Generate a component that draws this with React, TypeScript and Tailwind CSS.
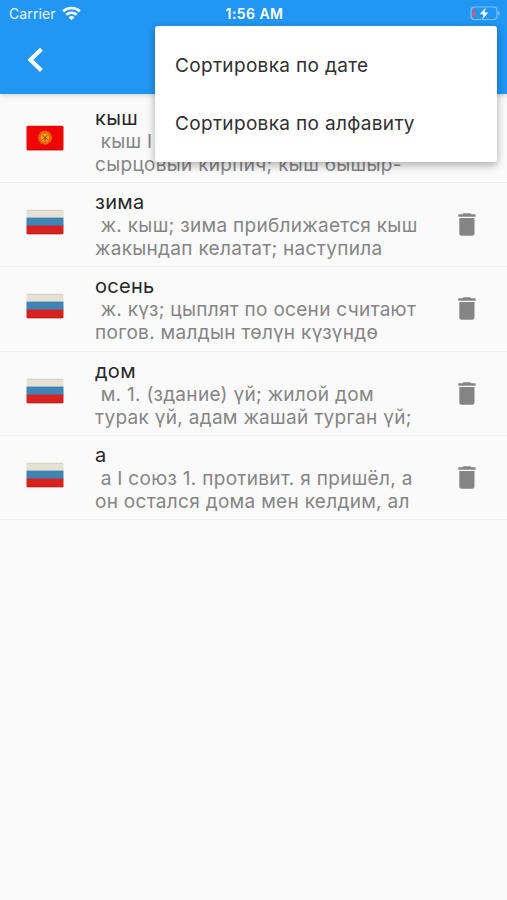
import React from 'react';

interface Entry {
  word: string;
  lines: string[];
  lang: 'kg' | 'ru';
}

const entries: Entry[] = [
  { word: 'кыш', lines: [' кыш I', 'сырцовый кирпич; кыш бышыр-'], lang: 'kg' },
  { word: 'зима', lines: [' ж. кыш; зима приближается кыш', 'жакындап келатат; наступила'], lang: 'ru' },
  { word: 'осень', lines: [' ж. күз; цыплят по осени считают', 'погов. малдын төлүн күзүндө'], lang: 'ru' },
  { word: 'дом', lines: [' м. 1. (здание) үй; жилой дом', 'турак үй, адам жашай турган үй;'], lang: 'ru' },
  { word: 'а', lines: [' а I союз 1. противит. я пришёл, а', 'он остался дома мен келдим, ал'], lang: 'ru' },
];

const RussianFlag: React.FC = () => (
  <svg width="38" height="26" viewBox="0 0 38 26">
    <clipPath id="ru">
      <rect x="0.5" y="0.7" width="37" height="24.6" rx="1.5" />
    </clipPath>
    <g clipPath="url(#ru)">
      <rect width="38" height="9" fill="#e6e1d5" />
      <rect y="8.6" width="38" height="8.4" fill="#3f84b5" />
      <rect y="16.6" width="38" height="9.4" fill="#d8221f" />
      <path d="M0 25h38" stroke="#ad1c18" strokeWidth="1" />
      <path d="M0 1.2h38" stroke="#d0cbbd" strokeWidth="1" />
    </g>
  </svg>
);

const KyrgyzFlag: React.FC = () => (
  <svg width="38" height="26" viewBox="0 0 38 26">
    <rect x="0.5" y="0.7" width="37" height="24.6" rx="1.5" fill="#ee0505" />
    <path d="M1 24.8h36" stroke="#b80808" strokeWidth="0.8" />
    <circle cx="19" cy="12.6" r="6" fill="none" stroke="#e8800c" strokeWidth="1.8" strokeDasharray="1.2 0.3" />
    <circle cx="19" cy="12.6" r="5" fill="#f4a414" />
    <path d="M19 12.6l-2.6-2.8M19 12.6l2.6-2.8M19 12.6v3.6M16.2 14.8l2.8-2.2 2.8 2.2" fill="none" stroke="#8f2a08" strokeWidth="0.8" />
    <circle cx="19" cy="12.6" r="4.6" fill="none" stroke="#d8580a" strokeWidth="0.6" />
  </svg>
);

const TrashIcon: React.FC = () => (
  <svg width="18" height="23" viewBox="0 0 18 23" fill="#858585">
    <path d="M0.3 1.3h4.2L5.4 0.3h7.1l0.9 1h4.2v2.4H0.3z" />
    <path d="M1.3 5h15.2v15.4a2.3 2.3 0 0 1-2.3 2.3H3.6a2.3 2.3 0 0 1-2.3-2.3z" />
  </svg>
);

const StatusBar: React.FC = () => (
  <div className="grid h-[27px] grid-cols-3 items-center pl-[9px] pr-[7px] text-white">
    <div className="flex items-center gap-[6px]">
      <span className="text-[14px] tracking-[0.1px] text-white/90">Carrier</span>
      <svg width="19" height="15" viewBox="0 0 19 15" fill="none" stroke="white" strokeWidth="2.6">
        <path d="M1.2 5.3a12 12 0 0 1 16.6 0" />
        <path d="M4.3 8.8a7.6 7.6 0 0 1 10.4 0" />
        <path d="M9.5 14.3l-2.9-3a4.3 4.3 0 0 1 5.8 0z" fill="white" stroke="none" />
      </svg>
    </div>
    <span className="pb-px text-center text-[14px] font-semibold tracking-[0.45px]">1:56 AM</span>
    <svg className="justify-self-end" width="30" height="15" viewBox="0 0 30 15">
      <rect x="1" y="1" width="26" height="12.5" rx="3.5" fill="none" stroke="white" strokeOpacity="0.42" strokeWidth="1.2" />
      <path d="M28.2 5v4.6c1.1-.5 1.7-1.3 1.7-2.3s-.6-1.8-1.7-2.3z" fill="white" fillOpacity="0.42" />
      <rect x="2.8" y="3" width="2.6" height="8.5" rx="1" fill="#d9566b" />
      <path d="M15.6 1.8l-5.8 6.4h3.6l-1 5 5.8-6.6h-3.6z" fill="white" />
    </svg>
  </div>
);

const EntryRow: React.FC<{ entry: Entry; deletable: boolean }> = ({ entry, deletable }) => (
  <li className="flex h-[84.25px] items-center border-b border-[#eeeeee] pl-[26px] pr-[31px]">
    <div className="w-[69px] shrink-0 pb-[5px]">
      {entry.lang === 'kg' ? <KyrgyzFlag /> : <RussianFlag />}
    </div>
    <div className="flex-1 whitespace-pre pt-[2px]">
      <p className="h-[23px] text-[20px] leading-[23px] tracking-[0.3px] text-[#272727]">{entry.word}</p>
      {entry.lines.map((line) => (
        <p key={line} className="h-[23px] text-[19px] leading-[23px] tracking-[0.3px] text-[#858585]">
          {line}
        </p>
      ))}
    </div>
    {deletable && (
      <button type="button" aria-label="Удалить">
        <TrashIcon />
      </button>
    )}
  </li>
);

const App: React.FC = () => {
  return (
    <div className="relative h-[900px] w-[507px] overflow-hidden bg-[#fafafa] font-['Inter','Noto_Sans',sans-serif]">
      <header className="h-[94px] bg-[#2196f3] shadow-[0_2px_5px_rgba(0,0,0,0.14)]">
        <StatusBar />
        <div className="flex h-[65px] items-center pl-[27px]">
          <svg width="17" height="26" viewBox="0 0 17 26" fill="none" stroke="white" strokeWidth="4">
            <path d="M14.4 2.2L3.4 12.8l11 10.7" />
          </svg>
        </div>
      </header>

      <ul className="pt-[4.75px]">
        {entries.map((entry, i) => (
          <EntryRow key={entry.word} entry={entry} deletable={i > 0} />
        ))}
      </ul>

      <div className="absolute left-[155px] top-[25.5px] flex h-[136.5px] w-[342px] flex-col rounded-[3px] bg-white pt-[11px] text-[19px] tracking-[0.33px] text-[#303030] shadow-[0_3px_9px_rgba(0,0,0,0.32)]">
        <button type="button" className="flex h-[58.5px] items-center pl-5">Сортировка по дате</button>
        <button type="button" className="flex h-[58.5px] items-center pl-5">Сортировка по алфавиту</button>
      </div>
    </div>
  );
};

export default App;
